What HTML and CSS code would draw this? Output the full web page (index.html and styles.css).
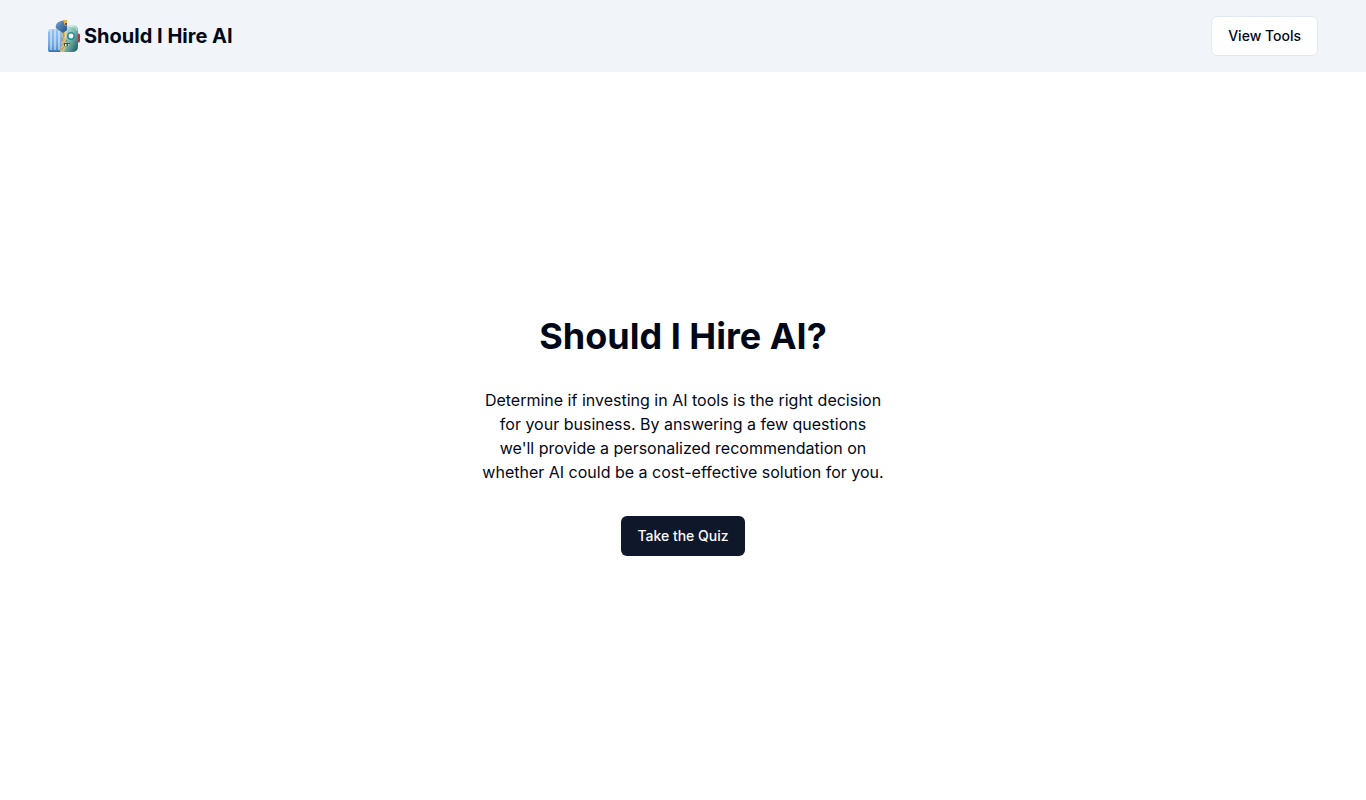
FILE: index.html
```html
<!DOCTYPE html>
<html lang="en">
<head>
  <meta charset="UTF-8" />
  <meta name="viewport" content="width=device-width, initial-scale=1.0"/>
  <title>Should I Hire AI</title>
  <link rel="stylesheet" href="styles.css">
</head>
<body>

  <header class="header">
    <a class="brand" href="/">
      <svg class="logo" viewBox="0 0 32 32" aria-hidden="true">
        <defs>
          <linearGradient id="shirt" x1="0" y1="0" x2="0" y2="1">
            <stop offset="0" stop-color="#b5d5f1"/>
            <stop offset="0.6" stop-color="#80b2e4"/>
            <stop offset="1" stop-color="#3979c0"/>
          </linearGradient>
          <linearGradient id="face" x1="0" y1="0" x2="1" y2="1">
            <stop offset="0" stop-color="#d3e8df"/>
            <stop offset="0.45" stop-color="#7dbdb5"/>
            <stop offset="1" stop-color="#12535b"/>
          </linearGradient>
          <linearGradient id="head" x1="0" y1="0" x2="1" y2="1">
            <stop offset="0" stop-color="#75a3ce"/>
            <stop offset="1" stop-color="#204f87"/>
          </linearGradient>
        </defs>
        <!-- shirt -->
        <path d="M3 9h13v23H2q-2 0-2-2V12q0-3 3-3z" fill="url(#shirt)"/>
        <path d="M3 10v20M7 10v20M11 11v19" stroke="#cfe4f7" stroke-width="1.2"/>
        <path d="M1 12v18M5 10v20M9 10v20M13 12v18" stroke="#6ea3da" stroke-width="0.8"/>
        <path d="M1 31.500h14" stroke="#3974b2" stroke-width="1"/>
        <!-- robot face -->
        <rect x="28" y="13.500" width="4" height="9" rx="1.500" fill="#bc3344"/>
        <path d="M29.500 15v6" stroke="#743444" stroke-width="1"/>
        <path d="M16 5.500h9q5 0 5 5V26q0 6-6 6h-8z" fill="url(#face)"/>
        <path d="M18 6.500h7q4 0 4 4" fill="none" stroke="#d5ebe2" stroke-width="1"/>
        <!-- split down the middle -->
        <path d="M14 10h3l2 4-2 5 1 5-2 8h-4l1-8 2-5-1-5z" fill="#d9bb78"/>
        <path d="M15 13l1 3-2 3 1 2M13 26l3-3M13 30l3-3" fill="none" stroke="#a5834a" stroke-width="0.8"/>
        <path d="M17 11l1 3-1 4" fill="none" stroke="#f0e1b5" stroke-width="1"/>
        <!-- eye and mouth -->
        <circle cx="23" cy="16" r="4" fill="#348d9b"/>
        <circle cx="23" cy="16" r="2.400" fill="#f3fcf7"/>
        <path d="M19 20l-1 2" stroke="#427c76" stroke-width="0.8"/>
        <path d="M16 23h6v2q-3 2-6 1z" fill="#3b4f49"/>
        <path d="M17 24h1.500v2H17zM20 24h1.500v1.500H20z" fill="#f4f0cf"/>
        <!-- head and antenna -->
        <path d="M8 5q1-3 5-4l4-1 2 5v5l-4 3-3-2-3-2q-2-1-1-4z" fill="url(#head)"/>
        <path d="M10 4l4-2" stroke="#6995bb" stroke-width="1"/>
        <path d="M15 0h4v5l-2 1z" fill="#e5b351"/>
        <path d="M17 3h2v2h-2z" fill="#595a70"/>
      </svg>
      <span>Should I Hire AI</span>
    </a>
    <button type="button" class="btn btn-outline">View Tools</button>
  </header>

  <main class="hero">
    <h1>Should I Hire AI?</h1>
    <p>Determine if investing in AI tools is the right decision for your business. By answering a few questions we'll provide a personalized recommendation on whether AI could be a cost-effective solution for you.</p>
    <button type="button" class="btn btn-primary">Take the Quiz</button>
  </main>

</body>
</html>
```

FILE: styles.css
```css
* {
  box-sizing: border-box;
}
body {
  font-family: Inter, sans-serif;
  font-size: 16px;
  line-height: 24px;
  color: #020817;
  background: white;
  margin: 0;
  min-height: 100vh;
  display: flex;
  flex-direction: column;
}
.header {
  display: flex;
  align-items: center;
  justify-content: space-between;
  padding: 16px 48px;
  background: #f1f5f9;
}
.brand {
  display: flex;
  align-items: center;
  gap: 4px;
  font-size: 20px;
  line-height: 28px;
  font-weight: 700;
  color: inherit;
  text-decoration: none;
}
.logo {
  width: 32px;
  height: 32px;
}
.hero {
  flex: 1;
  display: flex;
  flex-direction: column;
  align-items: center;
  justify-content: center;
  gap: 32px;
  text-align: center;
}
h1 {
  margin: 0;
  font-size: 36px;
  line-height: 40px;
  font-weight: 700;
}
p {
  margin: 0;
  max-width: 404px;
}
.btn {
  height: 40px;
  padding: 8px 16px;
  border: none;
  border-radius: 6px;
  font-family: inherit;
  font-size: 14px;
  line-height: 20px;
  font-weight: 500;
  cursor: pointer;
}
.btn-outline {
  background: white;
  color: #020817;
  border: 1px solid #e2e8f0;
}
.btn-primary {
  background: #0f172a;
  color: #f8fafc;
}
.btn-primary:hover {
  background: #272e3f;
}
```
